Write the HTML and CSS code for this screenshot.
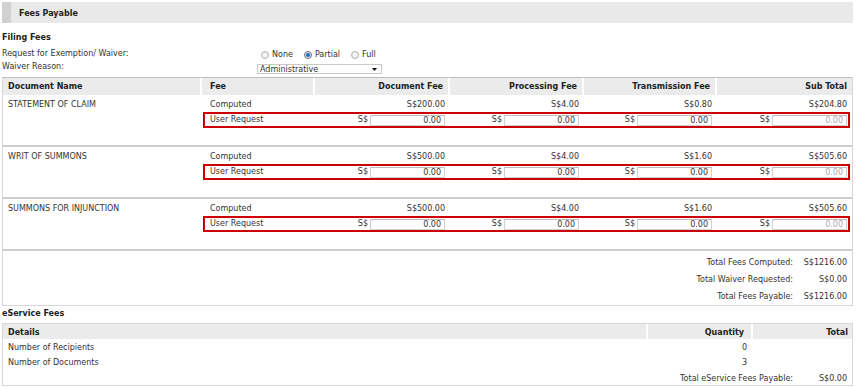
FILE: index.html
```html
<!DOCTYPE html>
<html lang="en">
<head>
  <meta charset="UTF-8" />
  <meta name="viewport" content="width=device-width, initial-scale=1" />
  <title>Fees Payable</title>
  <link rel="stylesheet" href="styles.css">
</head>
<body>

  <div class="page">

    <div class="bar">Fees Payable</div>

    <!-- Filing Fees -->
    <h3 class="section-title filing-title">Filing Fees</h3>
    <div class="waiver">
      <div class="waiver-label">Request for Exemption/ Waiver:</div>
      <div class="radios">
        <label class="radio"><input type="radio" name="waiver" value="none" />None</label>
        <label class="radio"><input type="radio" name="waiver" value="partial" checked />Partial</label>
        <label class="radio"><input type="radio" name="waiver" value="full" />Full</label>
      </div>
      <div class="waiver-label">Waiver Reason:</div>
      <div class="select">
        <span>Administrative</span>
        <svg width="5" height="3" viewBox="0 0 5 3"><path d="M0 0h5L2.5 3z" fill="#111"/></svg>
      </div>
    </div>

    <div class="fees">
      <div class="cols fees-head">
        <div class="cell">Document Name</div>
        <div class="cell fee-col">Fee</div>
        <div class="cell num">Document Fee</div>
        <div class="cell num">Processing Fee</div>
        <div class="cell num">Transmission Fee</div>
        <div class="cell num">Sub Total</div>
      </div>

      <div class="cols doc">
        <div class="cell doc-name">STATEMENT OF CLAIM</div>
        <div class="cell fee-col">Computed</div>
        <div class="cell num">S$200.00</div>
        <div class="cell num">S$4.00</div>
        <div class="cell num">S$0.80</div>
        <div class="cell num">S$204.80</div>
        <div class="request">
          <div class="req-label">User Request</div>
          <div class="req-cell doc-fee">S$<input class="amount" type="text" value="0.00" /></div>
          <div class="req-cell proc-fee">S$<input class="amount" type="text" value="0.00" /></div>
          <div class="req-cell trans-fee">S$<input class="amount" type="text" value="0.00" /></div>
          <div class="req-cell sub-fee">S$<input class="amount" type="text" value="0.00" disabled /></div>
        </div>
      </div>

      <div class="cols doc">
        <div class="cell doc-name">WRIT OF SUMMONS</div>
        <div class="cell fee-col">Computed</div>
        <div class="cell num">S$500.00</div>
        <div class="cell num">S$4.00</div>
        <div class="cell num">S$1.60</div>
        <div class="cell num">S$505.60</div>
        <div class="request">
          <div class="req-label">User Request</div>
          <div class="req-cell doc-fee">S$<input class="amount" type="text" value="0.00" /></div>
          <div class="req-cell proc-fee">S$<input class="amount" type="text" value="0.00" /></div>
          <div class="req-cell trans-fee">S$<input class="amount" type="text" value="0.00" /></div>
          <div class="req-cell sub-fee">S$<input class="amount" type="text" value="0.00" disabled /></div>
        </div>
      </div>

      <div class="cols doc">
        <div class="cell doc-name">SUMMONS FOR INJUNCTION</div>
        <div class="cell fee-col">Computed</div>
        <div class="cell num">S$500.00</div>
        <div class="cell num">S$4.00</div>
        <div class="cell num">S$1.60</div>
        <div class="cell num">S$505.60</div>
        <div class="request">
          <div class="req-label">User Request</div>
          <div class="req-cell doc-fee">S$<input class="amount" type="text" value="0.00" /></div>
          <div class="req-cell proc-fee">S$<input class="amount" type="text" value="0.00" /></div>
          <div class="req-cell trans-fee">S$<input class="amount" type="text" value="0.00" /></div>
          <div class="req-cell sub-fee">S$<input class="amount" type="text" value="0.00" disabled /></div>
        </div>
      </div>

      <div class="fees-totals">
        <div class="total-row"><span>Total Fees Computed:</span><span class="total-value">S$1216.00</span></div>
        <div class="total-row"><span>Total Waiver Requested:</span><span class="total-value">S$0.00</span></div>
        <div class="total-row"><span>Total Fees Payable:</span><span class="total-value">S$1216.00</span></div>
      </div>
    </div>

    <!-- eService Fees -->
    <h3 class="section-title eservice-title">eService Fees</h3>
    <div class="eservice">
      <div class="ecols eservice-head">
        <div class="cell">Details</div>
        <div class="cell num qty">Quantity</div>
        <div class="cell num">Total</div>
      </div>
      <div class="ecols erow">
        <div class="cell">Number of Recipients</div>
        <div class="cell num qty">0</div>
        <div class="cell num"></div>
      </div>
      <div class="ecols erow">
        <div class="cell">Number of Documents</div>
        <div class="cell num qty">3</div>
        <div class="cell num"></div>
      </div>
      <div class="total-row eservice-total"><span>Total eService Fees Payable:</span><span class="total-value">S$0.00</span></div>
    </div>

  </div>

</body>
</html>
```

FILE: styles.css
```css
* {
  box-sizing: border-box;
}

body {
  margin: 0;
  font-family: "DejaVu Sans", Verdana, sans-serif;
  font-size: 8px;
  line-height: 12px;
  color: #333;
  background-color: #fff;
}

.page {
  padding: 2px 3px 0 2px;
}

.bar {
  height: 21px;
  display: flex;
  align-items: center;
  padding: 2px 0 0 8px;
  background-color: #e9e9e9;
  border-left: 9px solid #d1d1d1;
  font-weight: bold;
  color: #222;
}

.section-title {
  margin: 0;
  font-size: 8px;
  line-height: 12px;
  font-weight: bold;
  color: #222;
}

.filing-title {
  margin-top: 9px;
}

/* waiver form */
.waiver {
  display: grid;
  grid-template-columns: 255px 125px;
  grid-template-rows: 13px 14px;
  margin-top: 3px;
}

.waiver-label {
  padding-top: 1px;
}

.radios {
  display: flex;
  align-items: center;
  gap: 7px;
  height: 12px;
  margin-top: 2px;
}

.radio {
  display: flex;
  align-items: center;
}

.radio input {
  appearance: none;
  width: 8px;
  height: 8px;
  margin: 0 3px 0 4px;
  border: 1px solid #b4b4b4;
  border-radius: 50%;
  background: radial-gradient(circle, #fdfdfd 0, #e6e6e6 4px);
}

.radio input:checked {
  border-color: #6f6f6f;
  background: radial-gradient(circle, #1a68c0 0, #2f7fd0 1.6px, #d7e4f1 2.4px, #f2f2f2 4px);
}

.select {
  display: flex;
  align-items: center;
  justify-content: space-between;
  height: 10px;
  margin-top: 4px;
  padding: 1px 4px 0 2px;
  border: 1px solid #c9c9c9;
  line-height: 8px;
}

/* filing fees table */
.fees {
  margin-top: 3px;
  border: 1px solid #d6d6d6;
  border-top-color: #bdbdbd;
}

.cols {
  display: grid;
  grid-template-columns: 199px 113px 135px 134px 133px 1fr;
}

.cell {
  padding: 0 5px;
  white-space: nowrap;
}

.num {
  text-align: right;
}

.fee-col {
  padding-left: 8px;
}

.fees-head {
  height: 17px;
  line-height: 17px;
  font-weight: bold;
  color: #222;
}

.fees-head .cell,
.eservice-head .cell {
  background-color: #ebebeb;
  border-right: 2px solid #fff;
}

.fees-head .cell:last-child,
.eservice-head .cell:last-child {
  border-right: none;
}

.doc {
  height: 52px;
  padding-top: 4px;
  grid-template-rows: 12px 16px;
  row-gap: 1px;
  align-content: start;
  border-bottom: 2px solid #cdcdcd;
}

.doc-name {
  grid-row: span 2;
}

.request {
  grid-column: 2 / 7;
  display: flex;
  align-items: center;
  margin: 0 2px 0 1px;
  border: 2px solid #cc0000;
}

.req-label {
  width: 110px;
  padding-left: 5px;
}

.req-cell {
  display: flex;
  align-items: center;
  justify-content: flex-end;
  gap: 2px;
  padding-right: 5px;
}

.doc-fee {
  width: 135px;
}

.proc-fee {
  width: 134px;
}

.trans-fee {
  width: 133px;
}

.sub-fee {
  flex: 1;
  padding-right: 1px;
}

.amount {
  width: 75px;
  height: 11px;
  margin: 0;
  padding: 0 3px;
  border: 1px solid #d0d0d0;
  border-top-color: #bcbcbc;
  font-family: inherit;
  font-size: 8px;
  color: #333;
  text-align: right;
  background-color: #fff;
}

.amount:disabled {
  color: #aaa;
  background-color: #fff;
}

.fees-totals {
  padding-top: 3px;
}

.total-row {
  display: flex;
  align-items: center;
  justify-content: flex-end;
  height: 17px;
  padding-right: 5px;
}

.total-value {
  width: 54px;
  text-align: right;
}

/* eService fees */
.eservice-title {
  margin-top: 2px;
  margin-bottom: 3px;
}

.eservice {
  border: 1px solid #d8d8d8;
}

.ecols {
  display: grid;
  grid-template-columns: 1fr 105px 99px;
}

.eservice-head {
  height: 15px;
  font-weight: bold;
  color: #222;
}

.eservice-head .cell {
  padding-top: 2px;
  line-height: 13px;
}

.eservice-head .cell:last-child {
  padding-right: 4px;
}

.qty {
  padding-right: 7px;
}

.erow {
  height: 15px;
  padding-top: 2px;
  line-height: 13px;
}

.erow .qty {
  padding-right: 6px;
}

.eservice-total {
  height: 16px;
  padding-top: 4px;
}
```
